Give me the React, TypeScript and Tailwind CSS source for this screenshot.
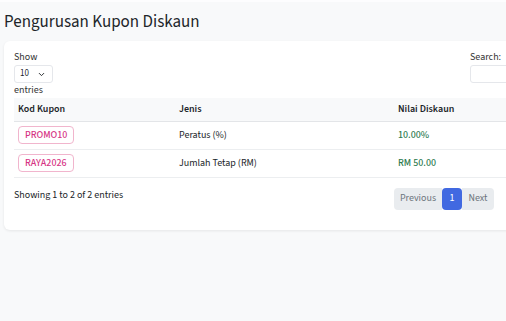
import { ChevronDown } from 'lucide-react';

const coupons = [
  { code: 'PROMO10', type: 'Peratus (%)', value: '10.00%' },
  { code: 'RAYA2026', type: 'Jumlah Tetap (RM)', value: 'RM 50.00' },
];

export default function App() {
  return (
    <div
      className="w-full h-screen overflow-hidden bg-[#f8f9fa] border-t-2 border-[#fdfdfe] text-[#212529]"
      style={{ fontFamily: '"Source Sans 3", Lato, sans-serif' }}
    >
      <div className="w-[620px] px-[4px]">
        {/* Page title */}
        <h1 className="pt-[9px] h-[39px] text-[17px] leading-[22px] font-normal">
          Pengurusan Kupon Diskaun
        </h1>

        {/* Card */}
        <div className="bg-white rounded-[6px] shadow-[0_1px_3px_rgba(0,0,0,0.08)] px-[10px] pt-[10px] pb-[20px]">
          {/* Controls */}
          <div className="flex justify-between text-[10px]">
            <div className="flex flex-col">
              <span className="leading-[13px] text-[#333]">Show</span>
              <div className="mt-[1px] w-[39px] h-[18px] border border-[#e5e7eb] rounded-[3px] flex items-center justify-between pl-[5px] pr-[6px] text-[9px]">
                <span>10</span>
                <ChevronDown size={9} strokeWidth={2.5} />
              </div>
              <span className="mt-[1px] leading-[13px] text-[#333]">entries</span>
            </div>
            <div className="flex flex-col w-[136px]">
              <span className="leading-[13px] text-[#333]">Search:</span>
              <div className="mt-[1px] h-[18px] border border-[#e5e7eb] rounded-[3px]" />
            </div>
          </div>

          {/* Table */}
          <table className="mt-[1px] w-full text-[10px] border-collapse">
            <thead>
              <tr className="bg-[#f8f9fa] border-b border-[#e3e5e8]">
                <th className="w-[161px] h-[23px] pl-[4px] text-left font-semibold">Kod Kupon</th>
                <th className="w-[219px] pl-[4px] text-left font-semibold">Jenis</th>
                <th className="pl-[4px] text-left font-semibold">Nilai Diskaun</th>
              </tr>
            </thead>
            <tbody>
              {coupons.map((c) => (
                <tr key={c.code} className="border-b border-[#eceef0]">
                  <td className="h-[28px] pl-[4px]">
                    <span className="inline-flex items-center h-[18px] px-[6px] border border-[#f1b5cd] rounded-[4px] text-[#d63384] font-medium">
                      {c.code}
                    </span>
                  </td>
                  <td className="pl-[4px]">{c.type}</td>
                  <td className="pl-[4px] text-[#2d7a4f] font-medium">{c.value}</td>
                </tr>
              ))}
            </tbody>
          </table>

          {/* Footer */}
          <div className="mt-[10px] flex items-start text-[10px]">
            <span className="w-[380px] leading-[14px]">Showing 1 to 2 of 2 entries</span>
            <div className="flex h-[22px] text-[#6c757d]">
              <span className="w-[48px] flex items-center justify-center bg-[#e9ecef] rounded-l-[4px]">Previous</span>
              <span className="w-[20px] flex items-center justify-center bg-[#4169e1] text-white rounded-[4px]">1</span>
              <span className="w-[32px] flex items-center justify-center bg-[#e9ecef] rounded-r-[4px]">Next</span>
            </div>
          </div>
        </div>
      </div>
    </div>
  );
}
